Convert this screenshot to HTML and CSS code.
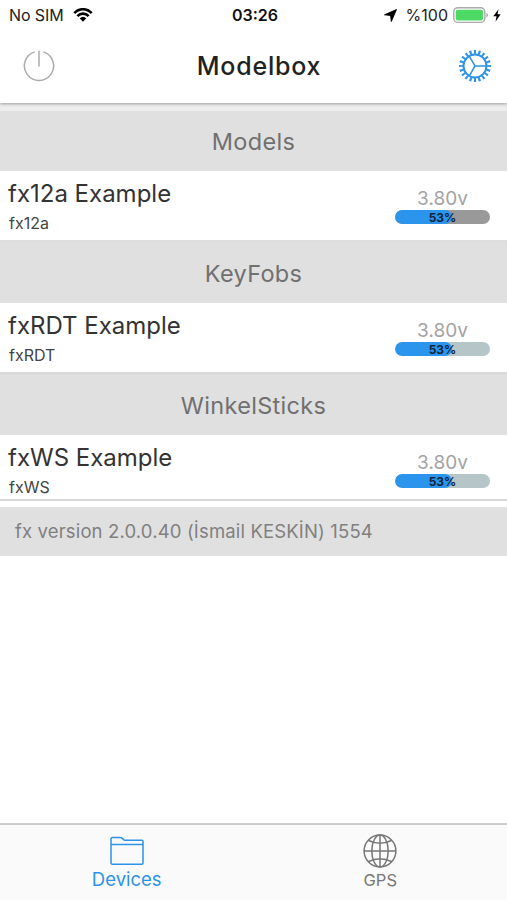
FILE: index.html
```html
<!DOCTYPE html>
<html lang="en">
<head>
<meta charset="utf-8">
<title>Modelbox</title>
<link rel="stylesheet" href="styles.css">
</head>
<body>
<header class="header">
  <div class="status">
    <div class="status-left">
      <span class="carrier">No SIM</span>
      <svg class="wifi" width="20" height="14" viewBox="0 0 20 14" fill="none" stroke="#000" stroke-width="2.6"><path d="M1.3 5.2C6-.1 14-.1 18.7 5.2M4.4 8.2c3-3.4 8.200-3.400 11.200 0"/><path d="M6.700 10.200Q10 7.200 13.300 10.200L10 13.700Z" fill="#000" stroke="none"/></svg>
    </div>
    <span class="clock">03:26</span>
    <div class="status-right">
      <svg width="13" height="13" viewBox="0 0 13 13"><path d="M12.500.5 7.300 12.500 6.600 6.500.5 5.800Z" fill="#000" stroke="#000" stroke-linejoin="round" stroke-width=".9"/></svg>
      <span class="percent">%100</span>
      <svg width="37" height="17" viewBox="0 0 37 17"><rect x=".8" y=".8" width="31" height="14.600" rx="4" fill="#fff" stroke="#aaa" stroke-width="1.400"/><rect x="2.700" y="2.700" width="27.300" height="10.800" rx="2" fill="#4cd964"/><path d="M33.500 5.800q3 2.300 0 4.600Z" fill="#999"/></svg>
      <svg class="bolt" width="8" height="13" viewBox="0 0 8 13"><path d="M5.500.3.300 7.300H3.500L2.500 12.700 7.700 5.300H4.500Z" fill="#000"/></svg>
    </div>
  </div>
  <div class="titlebar">
    <svg width="32" height="32" viewBox="0 0 32 32" fill="none" stroke="#aaa" stroke-width="1.500"><path d="M11.700 1.900A14.600 14.600 0 1 0 20.300 1.900M16 .8V16.500"/></svg>
    <h1>Modelbox</h1>
    <svg width="34" height="34" viewBox="0 0 34 34" fill="none" stroke="#2d92e8"><circle cx="17" cy="17" r="11.500" stroke-width="2"/><circle cx="17" cy="17" r="14" stroke-width="4" pathLength="60" stroke-dasharray="1.400 1.600" stroke-dashoffset=".7"/><path d="M28.700 17H17L11.150 6.870M17 17 11.150 27.130" stroke-width="1.500"/></svg>
  </div>
</header>
<main>
  <section class="group">
    <h2>Models</h2>
    <div class="device first">
      <div><div class="name">fx12a Example</div><div class="kind">fx12a</div></div>
      <div class="charge"><div class="volts">3.80v</div><div class="bar dark"><div class="fill"></div><span>53%</span></div></div>
    </div>
  </section>
  <section class="group">
    <h2>KeyFobs</h2>
    <div class="device">
      <div><div class="name">fxRDT Example</div><div class="kind">fxRDT</div></div>
      <div class="charge"><div class="volts">3.80v</div><div class="bar"><div class="fill"></div><span>53%</span></div></div>
    </div>
  </section>
  <section class="group">
    <h2>WinkelSticks</h2>
    <div class="device last">
      <div><div class="name">fxWS Example</div><div class="kind">fxWS</div></div>
      <div class="charge"><div class="volts">3.80v</div><div class="bar"><div class="fill"></div><span>53%</span></div></div>
    </div>
  </section>
  <p class="version"><span>fx version 2.0.0.40 (İsmail KESKİN) 1554</span></p>
</main>
<nav class="tabs">
  <a class="tab active">
    <svg width="34" height="30" viewBox="0 0 34 30" fill="none" stroke="#2d92e8" stroke-width="1.500" stroke-linejoin="round"><path d="M1 27V3.200Q1 1.500 2.500 1.500H10q1.300 0 2.200.9l1.500 1.200q.8.700 2 .7H31.700Q33 4.300 33 5.600V27Q33 28.300 31.700 28.300H2.300Q1 28.300 1 27ZM1 8.500H33"/></svg>
    <span>Devices</span>
  </a>
  <a class="tab gps">
    <svg width="34" height="34" viewBox="0 0 34 34" fill="none" stroke="#777" stroke-width="1.500"><circle cx="17" cy="17" r="15.900"/><ellipse cx="17" cy="17" rx="8.200" ry="15.900"/><path d="M17 1V33M1 17H33M5.500 6.500Q17 12 28.500 6.500M5.500 27.500Q17 22 28.500 27.500"/></svg>
    <span>GPS</span>
  </a>
</nav>
</body>
</html>
```
FILE: styles.css
```css
* { box-sizing: border-box; }
body {
  margin: 0;
  width: 507px;
  height: 900px;
  display: flex;
  flex-direction: column;
  background: #fff;
  color: #333;
  font-family: Inter, "Liberation Sans", sans-serif;
}
.header {
  height: 103px;
  box-shadow: 0 1px 3px rgba(0, 0, 0, .35);
  z-index: 1;
}
.status {
  height: 30px;
  padding: 0 6px 0 9px;
  display: grid;
  grid-template-columns: 1fr auto 1fr;
  align-items: center;
  color: #222;
  font-size: 16px;
}
.status-left, .status-right { display: flex; align-items: center; }
.status-left { gap: 9px; }
.status-right { justify-content: flex-end; gap: 5px; }
.percent { margin-left: 4px; }
.bolt { margin-left: -2px; }
.carrier { letter-spacing: -.1px; }
.clock { font-weight: 600; font-size: 16px; color: #111; }
.titlebar {
  height: 72px;
  padding: 0 15px 0 23px;
  display: flex;
  align-items: center;
  justify-content: space-between;
}
h1 { margin: 0 0 0 5px; font-size: 25px; font-weight: 500; line-height: 32px; letter-spacing: .8px; color: #222; }
main { flex: 1; padding-top: 8px; background: linear-gradient(#eee 8px, transparent 8px); }
h2 {
  margin: 0;
  height: 60px;
  background: #e0e0e0;
  color: #707070;
  font-size: 23.500px;
  font-weight: 400;
  line-height: 61px;
  text-align: center;
  letter-spacing: .3px;
}
.device {
  height: 72px;
  padding: 8px 17px 0 8px;
  display: flex;
  justify-content: space-between;
  border-bottom: 3px solid #dadada;
}
.first { border-bottom-color: #dedede; }
.last { height: 66px; border-bottom: 2px solid #d8d8d8; }
.name { font-size: 24px; line-height: 30px; }
.kind { margin-top: 5px; font-size: 16px; line-height: 18px; color: #444; padding-left: 1px; }
.charge { width: 95px; padding-top: 8px; text-align: center; }
.volts { font-size: 19px; line-height: 23px; color: #a3a3a3; }
.bar {
  display: grid;
  height: 14px;
  border-radius: 7px;
  overflow: hidden;
  background: #b5c5c8;
  color: #10263a;
  font-size: 12px;
  font-weight: 700;
  line-height: 16px;
}
.bar > * { grid-area: 1 / 1; }
.fill { width: 60%; height: 14px; border-radius: 7px; background: #2b95ee; }
.dark { background: #999; }
.version {
  margin: 6px 0 0;
  height: 49px;
  padding-left: 15px;
  background: #e0e0e0;
  color: #808080;
  font-size: 18.500px;
  line-height: 49px;
  letter-spacing: .15px;
}
.tabs {
  height: 77px;
  display: grid;
  grid-template-columns: 1fr 1fr;
  background: #fafafa;
  border-top: 2px solid #ccc;
}
.tab { display: flex; flex-direction: column; align-items: center; padding-top: 11px; color: #777; font-size: 16.500px; }
.tab span { line-height: 24px; }
.active { color: #2d92e8; font-size: 18.500px; }
.active span { line-height: 26px; }
.gps { padding-top: 9px; }
```
